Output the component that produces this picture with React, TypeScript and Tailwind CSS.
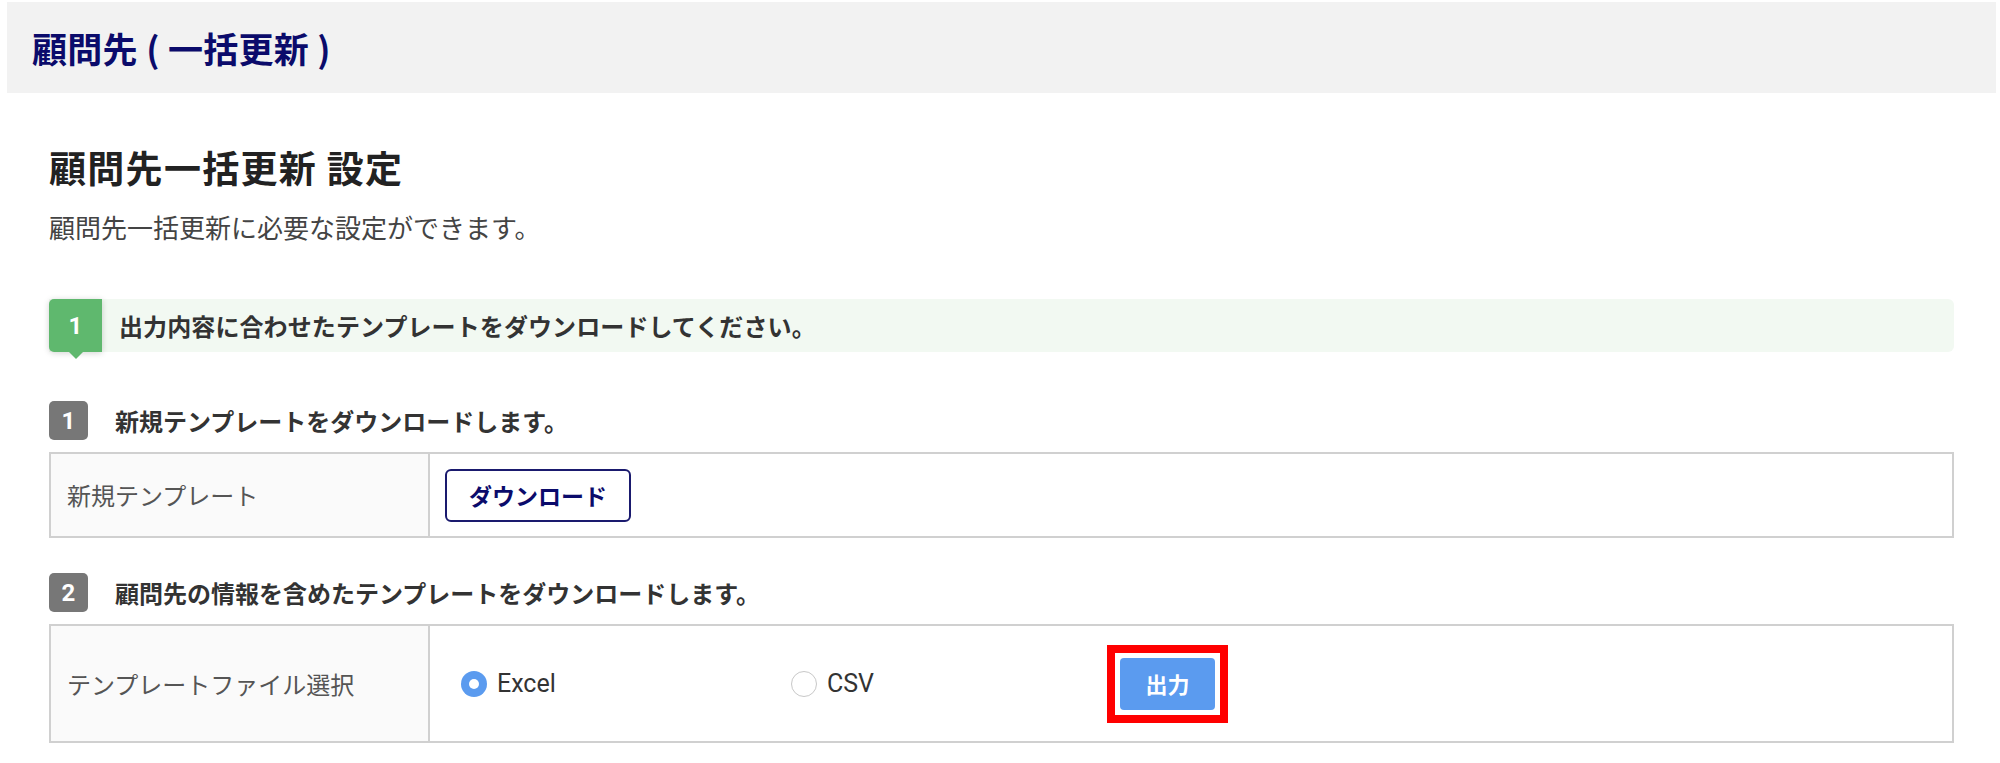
export default function App() {
    return (
        <div className="min-h-[763px] bg-white pt-[2px] pl-[7px] pr-[4px] font-['Noto_Sans_CJK_JP',sans-serif]">
            {/* page title bar */}
            <div className="h-[91px] bg-[#f2f2f2] flex items-center pl-[25px]">
                <h1 className="text-[35px] font-bold leading-none tracking-[0.3px] text-[#0b0b6b]">顧問先 ( 一括更新 )</h1>
            </div>

            <div className="pl-[42px] pr-[42px]">
                <h2 className="mt-[54px] text-[37px] leading-[40px] font-bold tracking-[1.3px] text-[#222]">顧問先一括更新 設定</h2>
                <p className="mt-[22px] text-[26px] leading-[36px] text-[#444]">顧問先一括更新に必要な設定ができます。</p>

                {/* step banner */}
                <div className="mt-[54px] h-[53px] flex items-center bg-[#f2f9f2] rounded-r-[6px]">
                    <div className="relative w-[53px] h-[53px] bg-[#5fb86e] rounded-l-[5px] flex items-center justify-center shadow-[0_1px_6px_rgba(0,0,0,0.18)]">
                        <span className="font-['Roboto',sans-serif] text-[24px] font-bold text-white">1</span>
                        <span className="absolute left-1/2 -translate-x-1/2 top-full w-0 h-0 border-l-[7px] border-r-[7px] border-t-[7px] border-l-transparent border-r-transparent border-t-[#5fb86e]"></span>
                    </div>
                    <span className="ml-[17px] text-[24px] font-bold tracking-[0.1px] text-[#333]">出力内容に合わせたテンプレートをダウンロードしてください。</span>
                </div>

                {/* 1 */}
                <div className="mt-[49px] flex items-center">
                    <span className="w-[39px] h-[39px] rounded-[5px] bg-[#777] flex items-center justify-center font-['Roboto',sans-serif] text-[24px] font-bold text-white">1</span>
                    <span className="ml-[27px] text-[24px] font-bold text-[#333]">新規テンプレートをダウンロードします。</span>
                </div>
                <div className="mt-[12px] h-[86px] flex border-2 border-[#d0d0d0]">
                    <div className="w-[379px] bg-[#fafafa] border-r-2 border-[#d0d0d0] flex items-center pl-[16px] text-[24px] text-[#555]">新規テンプレート</div>
                    <div className="flex-1 flex items-center pl-[15px]">
                        <button className="w-[186px] h-[53px] bg-white border-2 border-[#1a1a6e] rounded-[6px] text-[23px] font-bold text-[#0b0b6b]">ダウンロード</button>
                    </div>
                </div>

                {/* 2 */}
                <div className="mt-[35px] flex items-center">
                    <span className="w-[39px] h-[39px] rounded-[5px] bg-[#777] flex items-center justify-center font-['Roboto',sans-serif] text-[24px] font-bold text-white">2</span>
                    <span className="ml-[27px] text-[24px] font-bold text-[#333]">顧問先の情報を含めたテンプレートをダウンロードします。</span>
                </div>
                <div className="mt-[12px] h-[119px] flex border-2 border-[#d0d0d0]">
                    <div className="w-[379px] bg-[#fafafa] border-r-2 border-[#d0d0d0] flex items-center pl-[16px] text-[24px] text-[#555]">テンプレートファイル選択</div>
                    <div className="flex-1 flex items-center pl-[31px]">
                        <label className="w-[330px] flex items-center">
                            <span className="w-[26px] h-[26px] rounded-full bg-[#5b9bef] flex items-center justify-center">
                                <span className="w-[10px] h-[10px] rounded-full bg-white"></span>
                            </span>
                            <span className="ml-[10px] font-['Roboto',sans-serif] text-[25px] text-[#333]">Excel</span>
                        </label>
                        <label className="w-[316px] flex items-center">
                            <span className="w-[26px] h-[26px] rounded-full bg-white border border-[#c8c8c8]"></span>
                            <span className="ml-[10px] font-['Roboto',sans-serif] text-[25px] text-[#333]">CSV</span>
                        </label>
                        {/* highlight */}
                        <div className="border-[8px] border-[#ff0000] p-[5px]">
                            <button className="w-[95px] h-[52px] bg-[#5b9bef] rounded-[4px] text-[22px] font-bold text-white">出力</button>
                        </div>
                    </div>
                </div>
            </div>
        </div>
    )
}
